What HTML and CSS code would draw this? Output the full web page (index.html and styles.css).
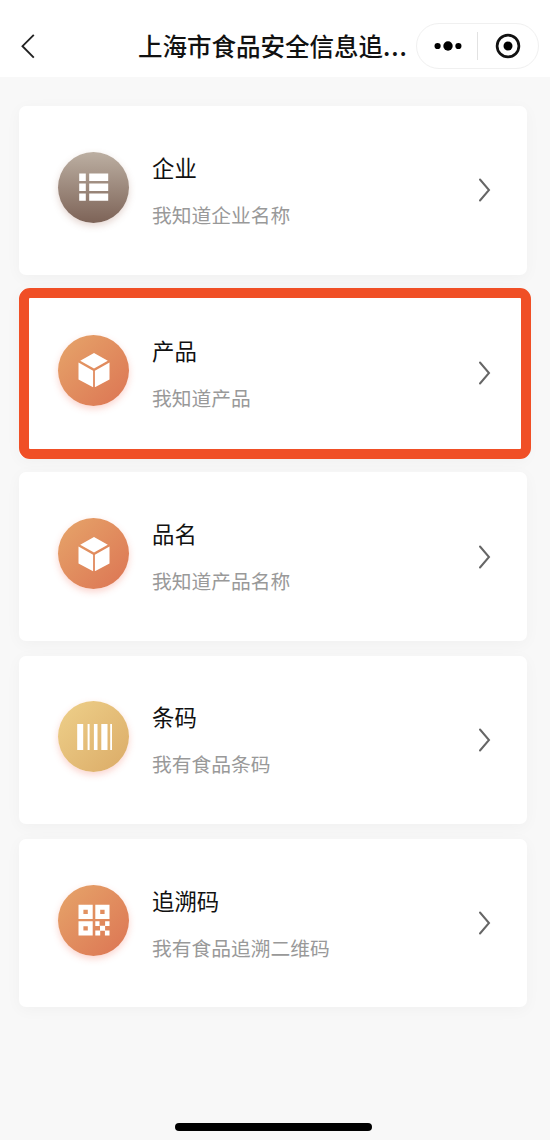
FILE: index.html
```html
<!DOCTYPE html>
<html lang="zh-CN">
<head>
<meta charset="utf-8">
<title>上海市食品安全信息追溯</title>
<link rel="stylesheet" href="styles.css">
</head>
<body>
<header class="navbar">
  <svg class="back" width="16" height="26" viewBox="0 0 16 26"><path d="M13.8 1.8 2.5 13.2 13.8 24.6"/></svg>
  <h1 class="navbar-title">上海市食品安全信息追<span class="dots">...</span></h1>
  <div class="capsule">
    <svg class="more" width="28" height="12" viewBox="0 0 28 12"><circle cx="3.6" cy="6" r="3.1"/><circle cx="14" cy="6" r="4.7"/><circle cx="24.4" cy="6" r="3.1"/></svg>
    <span class="divider"></span>
    <svg class="target" width="26" height="26" viewBox="0 0 26 26"><circle class="ring" cx="13" cy="13" r="10.9"/><circle cx="13" cy="13" r="4.5"/></svg>
  </div>
</header>
<main class="list">
  <a class="card">
    <span class="badge brown"><svg width="36" height="36" viewBox="0 0 36 36"><path d="M3.2 4.5h6.6v7.4H3.2zM13.2 4.5h19v7.4h-19zM3.2 14.5h6.6v7.4H3.2zM13.2 14.5h19v7.4h-19zM3.2 24.5h6.6v7.2H3.2zM13.2 24.5h19v7.2h-19z"/></svg></span>
    <span class="text"><span class="name">企业</span><span class="hint">我知道企业名称</span></span>
    <svg class="arrow" width="14" height="26" viewBox="0 0 14 26"><path d="M2 2.5 11 13 2 23.5"/></svg>
  </a>
  <a class="card highlighted">
    <span class="badge orange"><svg width="36" height="36" viewBox="0 0 36 36"><path d="M18 1 31.8 8.8 18 16.6 4.2 8.8zM2.5 10.6 17.1 18.8V35.2L2.5 27.6zM33.5 10.6 18.9 18.8V35.2l14.6-7.6z"/></svg></span>
    <span class="text"><span class="name">产品</span><span class="hint">我知道产品</span></span>
    <svg class="arrow" width="14" height="26" viewBox="0 0 14 26"><path d="M2 2.5 11 13 2 23.5"/></svg>
  </a>
  <a class="card">
    <span class="badge orange"><svg width="36" height="36" viewBox="0 0 36 36"><path d="M18 1 31.8 8.8 18 16.6 4.2 8.8zM2.5 10.6 17.1 18.8V35.2L2.5 27.6zM33.5 10.6 18.9 18.8V35.2l14.6-7.6z"/></svg></span>
    <span class="text"><span class="name">品名</span><span class="hint">我知道产品名称</span></span>
    <svg class="arrow" width="14" height="26" viewBox="0 0 14 26"><path d="M2 2.5 11 13 2 23.5"/></svg>
  </a>
  <a class="card">
    <span class="badge gold"><svg width="36" height="36" viewBox="0 0 36 36"><path d="M1.2 5h6v26h-6zM11.6 5h2v26h-2zM17.9 5h3.6v26h-3.6zM25.3 5h6.2v26h-6.2zM34.2 5h1.8v26h-1.8z"/></svg></span>
    <span class="text"><span class="name">条码</span><span class="hint">我有食品条码</span></span>
    <svg class="arrow" width="14" height="26" viewBox="0 0 14 26"><path d="M2 2.5 11 13 2 23.5"/></svg>
  </a>
  <a class="card">
    <span class="badge orange"><svg width="36" height="36" viewBox="0 0 36 36"><path fill-rule="evenodd" d="M2.5 2.8h14.2v14.2H2.5zM7.4 7.7v4.4h4.4V7.7zM19.3 2.8h14.2v14.2H19.3zM24.2 7.7v4.4h4.4V7.7zM2.5 19.3h14.2v14.2H2.5zM7.4 24.2v4.4h4.4v-4.4z"/><path d="M19.3 19.3h4.2v4.4h5.6v-4.4h4.4v4.6h-4.4v4.7h4.4v4.9h-4.6v-4.7h-4.7v4.7h-4.9v-4.9h4.7v-4.7h-4.7z"/></svg></span>
    <span class="text"><span class="name">追溯码</span><span class="hint">我有食品追溯二维码</span></span>
    <svg class="arrow" width="14" height="26" viewBox="0 0 14 26"><path d="M2 2.5 11 13 2 23.5"/></svg>
  </a>
</main>
<footer class="home"><span class="home-bar"></span></footer>
</body>
</html>
```

FILE: styles.css
```css
* {
  box-sizing: border-box;
}

body {
  margin: 0;
  height: 1140px;
  display: flex;
  flex-direction: column;
  overflow: hidden;
  background: #f8f8f8;
  color: #111;
  font-family: "Noto Sans CJK SC", sans-serif;
}

.navbar {
  position: relative;
  z-index: 1;
  display: flex;
  flex-shrink: 0;
  align-items: center;
  height: 77px;
  padding: 15px 11px 0 20px;
  background: #fff;
}

.back {
  fill: none;
  stroke: #222;
  stroke-width: 1.9;
}

.navbar-title {
  margin: 0 0 0 102px;
  width: 278px;
  font-size: 24.5px;
  font-weight: 500;
  line-height: 36px;
  white-space: nowrap;
}

.dots {
  letter-spacing: 0.9px;
}

.capsule {
  display: flex;
  align-items: center;
  width: 123px;
  height: 46px;
  padding-left: 17px;
  border: 1px solid #f0f0f0;
  border-radius: 23px;
}

.more {
  margin-right: 15px;
}

.divider {
  width: 1px;
  height: 28px;
  margin-right: 17px;
  background: #e2e2e2;
}

.target .ring {
  fill: none;
  stroke: #111;
  stroke-width: 2.7;
}

.list {
  display: flex;
  flex-direction: column;
  gap: 14.7px;
  padding: 29px 23px 0 19px;
}

.card {
  position: relative;
  display: flex;
  align-items: center;
  height: 168.5px;
  padding: 0 35px 0 39px;
  border-radius: 7px;
  background: #fff;
  box-shadow: 0 3px 16px rgba(0, 0, 0, 0.035);
}

.highlighted::after {
  content: "";
  position: absolute;
  inset: -1.7px -3.5px -1px 0;
  border: 10px solid #f04f26;
  border-radius: 11px;
}

.badge {
  display: flex;
  align-items: center;
  justify-content: center;
  width: 71px;
  height: 71px;
  margin: 0 23px 6px 0;
  border-radius: 50%;
  box-shadow: 0 3px 7px rgba(240, 100, 80, 0.28);
}

.badge svg {
  fill: #fff;
}

.brown {
  background: linear-gradient(180deg, #bcafa2, #7d6357);
  box-shadow: 0 3px 7px rgba(150, 90, 70, 0.25);
}

.orange {
  background: linear-gradient(135deg, #e6a56a, #dc7453);
}

.gold {
  background: linear-gradient(135deg, #eed08a, #dbab67);
}

.text {
  display: flex;
  flex: 1;
  flex-direction: column;
  gap: 19px;
}

.name {
  font-size: 22.4px;
  line-height: 30px;
}

.hint {
  color: #999;
  font-size: 19.75px;
  line-height: 28px;
}

.arrow {
  fill: none;
  stroke: #666;
  stroke-width: 2;
  stroke-linecap: round;
}

.home {
  display: flex;
  justify-content: center;
  margin-top: auto;
  padding: 0 4px 9px 0;
}

.home-bar {
  width: 197px;
  height: 8px;
  border-radius: 4px;
  background: #000;
}
```
